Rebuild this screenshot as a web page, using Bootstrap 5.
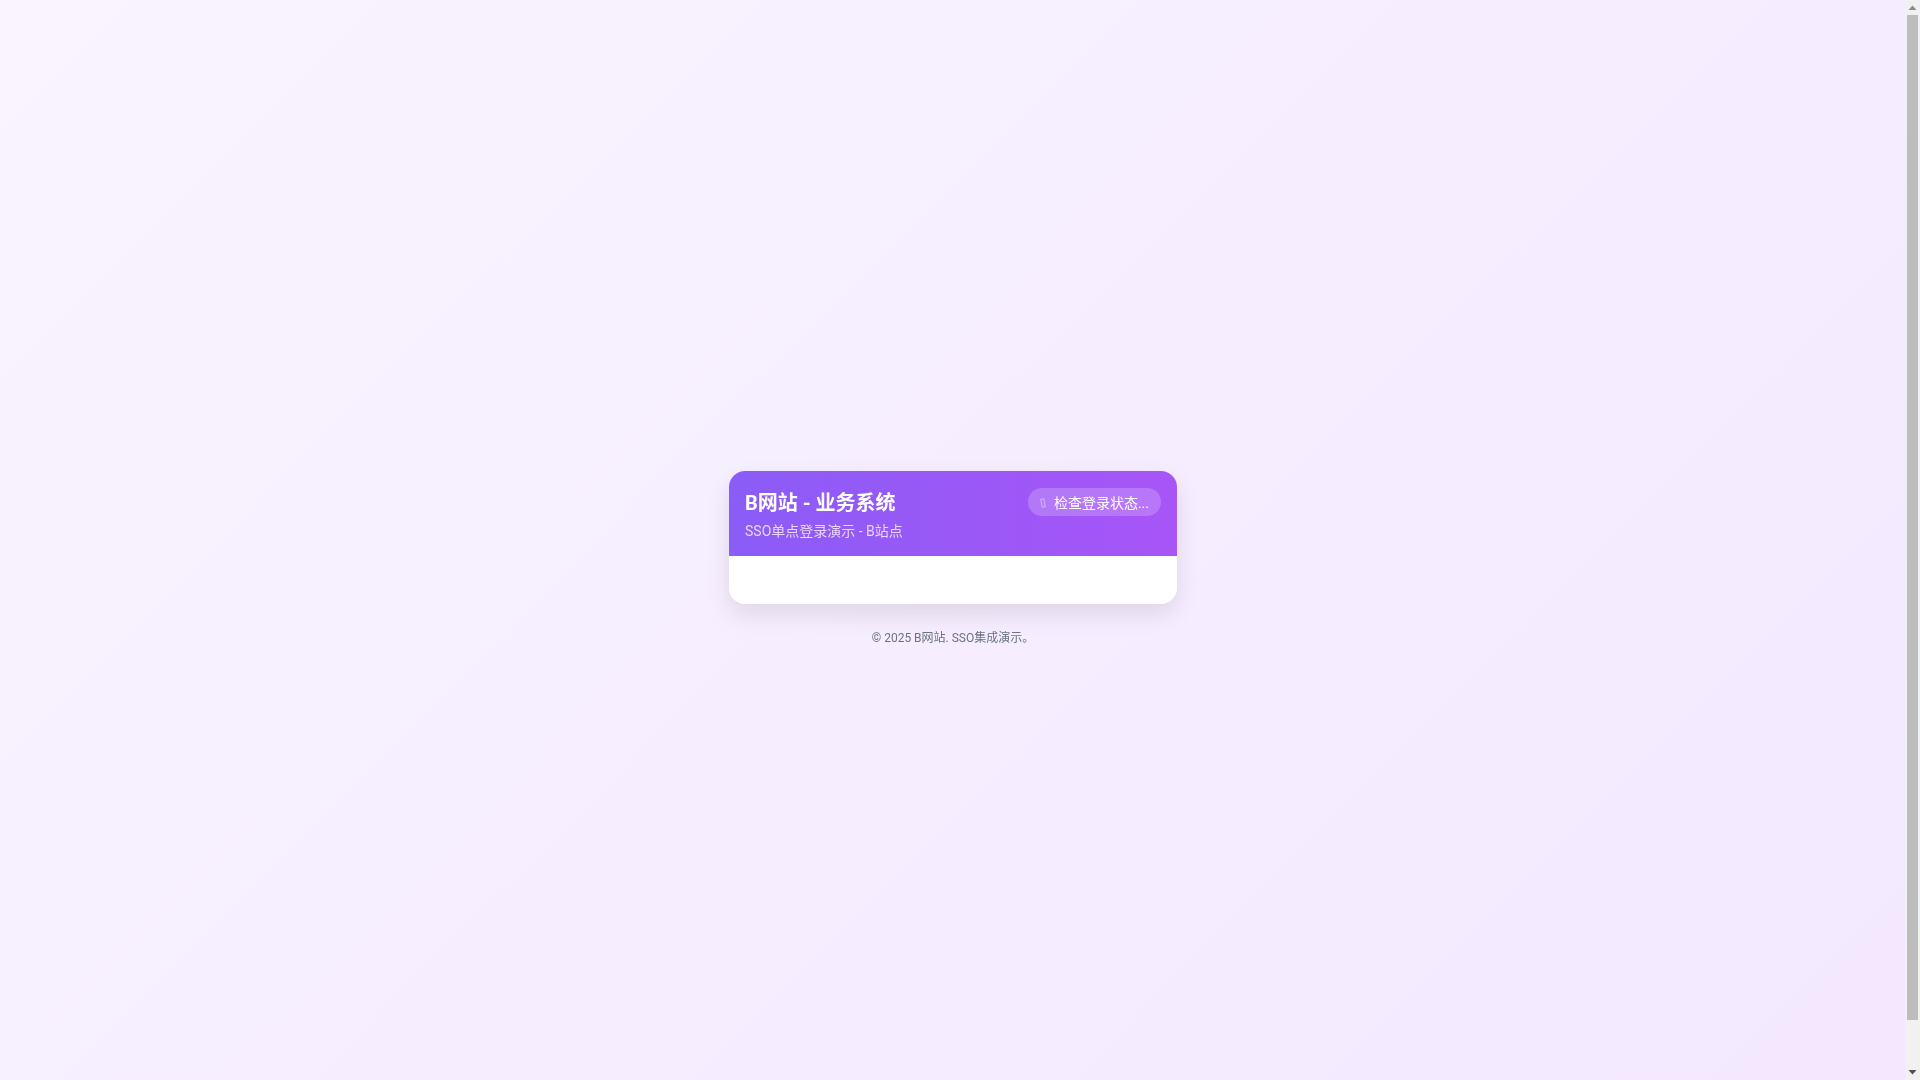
<!DOCTYPE html>
<html lang="zh-CN">
<head>
<meta charset="utf-8">
<title>B网站 - 业务系统</title>
<link href="https://cdn.jsdelivr.net/npm/bootstrap@5.3.0/dist/css/bootstrap.min.css" rel="stylesheet">
<style>
body {
  font-family: Roboto, "Noto Sans CJK SC", sans-serif;
  height: 100vh;
  overflow: hidden;
}
.page-shell {
  height: 1128px;
  padding: 0 16px 9px;
  background: linear-gradient(135deg, #f9f4ff 0%, #f3e8ff 100%);
}
.panel-wrap { width: 448px; transform: translateY(0); will-change: transform; }
.login-panel { border-radius: 16px; box-shadow: 0 10px 25px rgba(0,0,0,.1); }
.panel-head { background: linear-gradient(90deg, #8b5cf6, #a855f7); padding: 16px; height: 85px; }
.panel-title { font-size: 20px; line-height: 28px; font-weight: 700; margin-top: 2px; }
.panel-sub { font-size: 14px; line-height: 20px; color: #e9d5ff; margin-top: 4px; }
.status-pill { background: rgba(255,255,255,.2); font-size: 14px; line-height: 20px; padding: 5px 12px 3px; border-radius: 999px; margin-top: 1px; height: 28px; }
.pill-glyph { width: 6px; height: 10px; margin-right: 8px; flex-shrink: 0; }
.panel-body { height: 48px; }
.foot-note { font-size: 12px; line-height: 20px; color: #6b7280; margin-top: 24px; }
.fake-scroll { width: 15px; height: 100vh; background: #f1f1f1; padding: 0 2px; }
.scroll-arrow { height: 15px; }
.scroll-arrow svg { width: 11px; height: 15px; display: block; }
.scroll-thumb { height: 1005px; background: #bdbdbd; }
</style>
</head>
<body class="d-flex align-items-start">
<main class="page-shell flex-grow-1 d-flex align-items-center justify-content-center">
  <div class="panel-wrap">
    <div class="login-panel bg-white overflow-hidden">
      <div class="panel-head d-flex justify-content-between align-items-start text-white">
        <div>
          <div class="panel-title">B网站 - 业务系统</div>
          <div class="panel-sub">SSO单点登录演示 - B站点</div>
        </div>
        <div class="status-pill d-flex align-items-center"><svg class="pill-glyph" viewBox="0 0 6 10" aria-hidden="true"><rect x="1.5" y="1" width="3" height="8" fill="none" stroke="#fff" stroke-opacity=".45" transform="rotate(-12 3 5)"/></svg>检查登录状态...</div>
      </div>
      <div class="panel-body"></div>
    </div>
    <div class="foot-note text-center">© 2025 B网站. SSO集成演示。</div>
  </div>
</main>
<aside class="fake-scroll flex-shrink-0 d-flex flex-column" aria-hidden="true">
  <div class="scroll-arrow"><svg viewBox="0 0 11 15"><path d="M5.5 5.5 L9.5 10 L1.5 10 Z" fill="#8c8c8c"/></svg></div>
  <div class="scroll-thumb"></div>
  <div class="scroll-arrow mt-auto"><svg viewBox="0 0 11 15"><path d="M1.5 5 L9.5 5 L5.5 9.5 Z" fill="#505050"/></svg></div>
</aside>
<script src="https://cdn.jsdelivr.net/npm/bootstrap@5.3.0/dist/js/bootstrap.bundle.min.js"></script>
</body>
</html>
